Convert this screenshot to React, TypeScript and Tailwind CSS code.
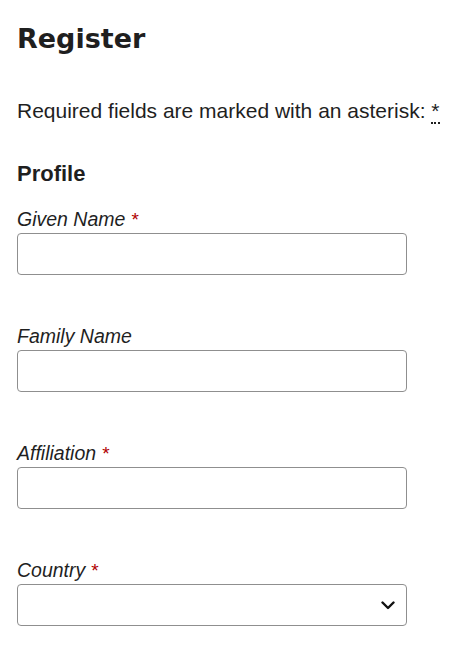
import React from 'react';

const Req = () => <span className="not-italic text-[#b00000] ml-1.5 text-[19px] leading-none">*</span>;

const Field: React.FC<{ label: string; required?: boolean; select?: boolean }> = ({ label, required, select }) => (
  <div className="mb-[49px]">
    <label className="block h-[24px] italic text-[19.5px] leading-[24px] mb-[2px]">
      {label}
      {required && <Req />}
    </label>
    {select ? (
      <div className="relative w-[390px] h-[42px] border border-[#8f8f8f] rounded-[4px] bg-white">
        <svg className="absolute right-[11px] top-[16px]" width="14" height="9" viewBox="0 0 14 9" fill="none">
          <path d="M1.5 1.5 L7 7 L12.5 1.5" stroke="#111" strokeWidth="2.4" strokeLinecap="round" strokeLinejoin="round" />
        </svg>
      </div>
    ) : (
      <input type="text" className="block w-[390px] h-[42px] border border-[#8f8f8f] rounded-[4px] bg-white outline-none px-2" />
    )}
  </div>
);

export default function App() {
  return (
    <div className="min-h-screen bg-white text-[#1f1f1f] px-[17px] pt-[20px]" style={{ fontFamily: '"Liberation Sans", Arial, sans-serif' }}>
      <h1 className="text-[27px] leading-[38px] font-bold" style={{ fontFamily: '"DejaVu Sans", sans-serif' }}>
        Register
      </h1>
      <p className="mt-[41px] text-[21px] leading-[24px]">
        Required fields are marked with an asterisk:{' '}
        <abbr title="required" className="no-underline border-b-2 border-dotted border-[#1f1f1f]">*</abbr>
      </p>
      <h2 className="mt-[37px] text-[22px] leading-[28px] font-bold">Profile</h2>
      <div className="mt-[19px]">
        <Field label="Given Name" required />
        <Field label="Family Name" />
        <Field label="Affiliation" required />
        <Field label="Country" required select />
      </div>
    </div>
  );
}
